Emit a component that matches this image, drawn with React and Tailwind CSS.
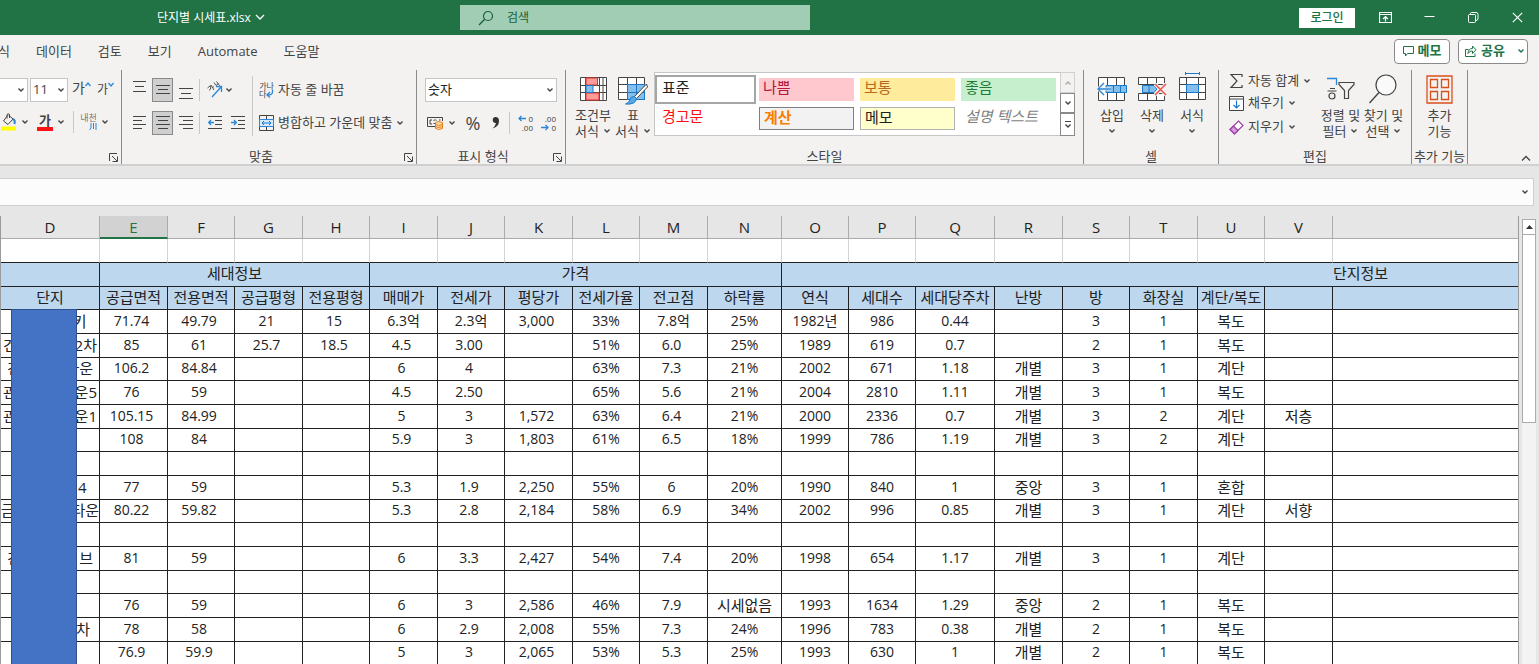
import { useState } from 'react';

// ── Sheet data ────────────────────────────────────────────────────────────
const COLUMNS = [
  { key: 'D', width: 99 },
  { key: 'E', width: 68 },
  { key: 'F', width: 67 },
  { key: 'G', width: 68 },
  { key: 'H', width: 67 },
  { key: 'I', width: 68 },
  { key: 'J', width: 67 },
  { key: 'K', width: 68 },
  { key: 'L', width: 67 },
  { key: 'M', width: 68 },
  { key: 'N', width: 74 },
  { key: 'O', width: 67 },
  { key: 'P', width: 67 },
  { key: 'Q', width: 79 },
  { key: 'R', width: 68 },
  { key: 'S', width: 67 },
  { key: 'T', width: 68 },
  { key: 'U', width: 67 },
  { key: 'V', width: 68 },
  { key: '', width: 607 },
];

const FIELDS = [
  '단지', '공급면적', '전용면적', '공급평형', '전용평형', '매매가', '전세가', '평당가', '전세가율', '전고점',
  '하락률', '연식', '세대수', '세대당주차', '난방', '방', '화장실', '계단/복도', '', '',
];

// name: [start, end, width] — the middle part is covered by the blue shape
const ROWS = [
  { name: ['', '키', 73], cells: ['71.74', '49.79', '21', '15', '6.3억', '2.3억', '3,000', '33%', '7.8억', '25%', '1982년', '986', '0.44', '', '3', '1', '복도', ''] },
  { name: ['건', '2차', 94], cells: ['85', '61', '25.7', '18.5', '4.5', '3.00', '', '51%', '6.0', '25%', '1989', '619', '0.7', '', '2', '1', '복도', ''] },
  { name: ['건', '타운', 86], cells: ['106.2', '84.84', '', '', '6', '4', '', '63%', '7.3', '21%', '2002', '671', '1.18', '개별', '3', '1', '계단', ''] },
  { name: ['관', '운5', 94], cells: ['76', '59', '', '', '4.5', '2.50', '', '65%', '5.6', '21%', '2004', '2810', '1.11', '개별', '3', '1', '복도', ''] },
  { name: ['관', '운1', 94], cells: ['105.15', '84.99', '', '', '5', '3', '1,572', '63%', '6.4', '21%', '2000', '2336', '0.7', '개별', '3', '2', '계단', '저층'] },
  { name: null, cells: ['108', '84', '', '', '5.9', '3', '1,803', '61%', '6.5', '18%', '1999', '786', '1.19', '개별', '3', '2', '계단', ''] },
  { name: null, cells: ['', '', '', '', '', '', '', '', '', '', '', '', '', '', '', '', '', ''] },
  { name: ['', '4', 73], cells: ['77', '59', '', '', '5.3', '1.9', '2,250', '55%', '6', '20%', '1990', '840', '1', '중앙', '3', '1', '혼합', ''] },
  { name: ['금', '타운', 98], cells: ['80.22', '59.82', '', '', '5.3', '2.8', '2,184', '58%', '6.9', '34%', '2002', '996', '0.85', '개별', '3', '1', '계단', '서향'] },
  { name: null, cells: ['', '', '', '', '', '', '', '', '', '', '', '', '', '', '', '', '', ''] },
  { name: ['건', '브', 86], cells: ['81', '59', '', '', '6', '3.3', '2,427', '54%', '7.4', '20%', '1998', '654', '1.17', '개별', '3', '1', '계단', ''] },
  { name: null, cells: ['', '', '', '', '', '', '', '', '', '', '', '', '', '', '', '', '', ''] },
  { name: null, cells: ['76', '59', '', '', '6', '3', '2,586', '46%', '7.9', '시세없음', '1993', '1634', '1.29', '중앙', '2', '1', '복도', ''] },
  { name: ['', '차', 80], cells: ['78', '58', '', '', '6', '2.9', '2,008', '55%', '7.3', '24%', '1996', '783', '0.38', '개별', '2', '1', '복도', ''] },
  { name: null, cells: ['76.9', '59.9', '', '', '5', '3', '2,065', '53%', '5.3', '25%', '1993', '630', '1', '개별', '2', '1', '복도', ''] },
];

// Columns in the number format that reserves room on the right
const PADDED = ['E', 'F', 'G', 'H', 'I', 'J', 'K', 'M'];
const HANGUL = /[가-힣]/;

// ── Small building blocks ─────────────────────────────────────────────────
function Svg({ w, h, children, className = '' }) {
  return (
    <svg
      width={w}
      height={h}
      viewBox={`0 0 ${w} ${h}`}
      fill="none"
      stroke="#444"
      aria-hidden="true"
      className={`shrink-0 ${className}`}
    >
      {children}
    </svg>
  );
}

function Chevron({ className = '', color = '#444' }) {
  return (
    <Svg w={8} h={6} className={className}>
      <path d="M1.5 1.5 4 4 6.5 1.5" stroke={color} strokeWidth="1.4" />
    </Svg>
  );
}

function Lines({ rows, w = 14 }) {
  return (
    <Svg w={w} h={18}>
      {rows.map(([y, x1, x2]) => (
        <path key={y} d={`M${x1} ${y}.5H${x2}`} />
      ))}
    </Svg>
  );
}

function Btn({ label, className = '', children }) {
  return (
    <button type="button" aria-label={label} className={`flex shrink-0 items-center ${className}`}>
      {children}
    </button>
  );
}

function Launcher() {
  return (
    <Btn label="옵션 열기" className="w-4">
      <Svg w={10} h={10} className="mt-1 ml-1">
        <path d="M.5 8V.5H8M3 3l5 5M8.500 3.500V8.500H3.500" />
      </Svg>
    </Btn>
  );
}

function Group({ label, width, launcher, children }) {
  return (
    <section className={`flex shrink-0 flex-col border-r border-[#8a8a8a] ${width}`}>
      <div className="h-[78px]">{children}</div>
      <div className="flex h-4 items-center">
        <span className="flex-1 text-center leading-4 whitespace-nowrap">{label}</span>
        {launcher && <Launcher />}
      </div>
    </section>
  );
}

function BigButton({ lines, width, icon, chevron }) {
  return (
    <button type="button" className={`flex shrink-0 flex-col items-center ${width}`}>
      <span className="flex h-9 items-center">{icon}</span>
      <span className="leading-4 whitespace-nowrap">{lines[0]}</span>
      <span className="flex h-4 items-center gap-1 leading-4 whitespace-nowrap">
        {lines[1]}
        {chevron && <Chevron />}
      </span>
    </button>
  );
}

// ── Title bar and tabs ────────────────────────────────────────────────────
function TitleBar() {
  return (
    <header className="flex h-[35px] shrink-0 items-center bg-[#217346] text-white">
      <div className="flex w-[460px] shrink-0 pl-[157px]">
        <button type="button" className="flex items-center gap-1 text-xs">
          단지별 시세표.xlsx
          <Svg w={10} h={7}>
            <path d="M1 1l4 4 4-4" stroke="#fff" strokeWidth="1.3" />
          </Svg>
        </button>
      </div>
      <label className="flex h-[25px] w-[350px] shrink-0 items-center bg-[#a0cdb4] pl-[18px] text-[#17603a]">
        <Svg w={16} h={16}>
          <circle cx="10" cy="6" r="4.500" stroke="#17603a" strokeWidth="1.2" />
          <path d="M6.700 9.300 1 15" stroke="#17603a" strokeWidth="1.3" />
        </Svg>
        <input
          aria-label="검색"
          placeholder="검색"
          className="ml-[13px] w-full bg-transparent text-xs outline-none placeholder:text-[#17603a]"
        />
      </label>
      <div className="flex-1" />
      <button type="button" className="mr-2 h-5 w-14 bg-white text-xs font-medium text-[#217346]">
        로그인
      </button>
      <Btn label="리본 표시 옵션" className="h-8 w-11 justify-center">
        <Svg w={13} h={11}>
          <path d="M.5.5h12v10H.5zM.5 2.500h12M6.500 9.500V5M4 7l2.500-2.500L9 7" stroke="#fff" strokeWidth="1.200" />
        </Svg>
      </Btn>
      <Btn label="최소화" className="h-8 w-11 justify-center">
        <Svg w={11} h={11}>
          <path d="M.5 4.500h10" stroke="#fff" />
        </Svg>
      </Btn>
      <Btn label="이전 크기로 복원" className="h-8 w-11 justify-center">
        <Svg w={11} h={11}>
          <rect x=".5" y="2.500" width="7" height="8" rx="1" stroke="#fff" />
          <path d="M2.500 2.500V1.500q0-1 1-1h4.500q2 0 2 2v4q0 2-2 2h-.5" stroke="#fff" />
        </Svg>
      </Btn>
      <Btn label="닫기" className="h-8 w-11 justify-center">
        <Svg w={11} h={11}>
          <path d="M.8.8l9.400 9.400M10.200.8.8 10.200" stroke="#fff" strokeWidth="1.2" />
        </Svg>
      </Btn>
    </header>
  );
}

function TabBar() {
  return (
    <nav className="flex h-8 shrink-0 items-center overflow-hidden pr-[11px]">
      <div className="-ml-0.5 flex gap-[26px]">
        {['식', '데이터', '검토', '보기', 'Automate', '도움말'].map((tab) => (
          <button key={tab} type="button" className="leading-5 whitespace-nowrap">
            {tab}
          </button>
        ))}
      </div>
      <div className="flex-1" />
      <button
        type="button"
        className="mr-2 flex h-[25px] w-14 items-center justify-center gap-1 rounded border border-[#8a8a8a] bg-white font-bold text-[#217346]"
      >
        <Svg w={11} h={11}>
          <path d="M.5.5h10v7h-6l-2 2.500V7.500h-2z" stroke="#217346" />
        </Svg>
        메모
      </button>
      <button
        type="button"
        className="flex h-[25px] w-[70px] items-center gap-1 rounded border border-[#8a8a8a] bg-white pl-1.5 font-bold text-[#217346]"
      >
        <Svg w={12} h={12}>
          <path d="M3.500 4.500h-3v7h9.500V8.500M3 8.500C3 5 5 3.500 7.500 3.500V1l3.500 3.800L7.500 8.500V6C5.500 6 4 6.800 3 8.500z" stroke="#217346" />
        </Svg>
        공유
        <Chevron className="ml-2" color="#217346" />
      </button>
    </nav>
  );
}

// ── Ribbon groups ─────────────────────────────────────────────────────────
function FontGroup() {
  return (
    <Group label="" width="w-[122px]" launcher>
      <div className="mt-2 flex h-6 items-center">
        <Btn label="글꼴" className="h-6 w-7 justify-end border border-l-0 border-[#c6c6c6] bg-white pr-0.5">
          <Chevron />
        </Btn>
        <Btn label="글꼴 크기" className="ml-0.5 h-6 w-[38px] justify-between border border-[#c6c6c6] bg-white pr-0.5 pl-0.5">
          11
          <Chevron />
        </Btn>
        <Btn label="글꼴 크기 크게" className="ml-1 h-6 items-start text-sm leading-5">
          가
          <Svg w={6} h={5} className="mt-1">
            <path d="M.5 4 3 1l2.500 3" stroke="#2b88d8" strokeWidth="1.300" />
          </Svg>
        </Btn>
        <Btn label="글꼴 크기 작게" className="ml-1.5 h-6 items-start text-xs leading-6">
          가
          <Svg w={6} h={5} className="mt-1">
            <path d="M.5 1 3 4l2.500-3" stroke="#2b88d8" strokeWidth="1.300" />
          </Svg>
        </Btn>
      </div>
      <div className="mt-2 flex h-6 items-center pl-px">
        <Btn label="채우기 색" className="gap-1">
          <Svg w={16} h={18}>
            <path d="M6.500 2.500 2.500 8l4.500 3.500 5-5.500-4.500-4M6 5.500V1.500q1.500-1.500 2.500 0V5" />
            <path d="M12 6q2.500 1 1.500 5" stroke="#2b88d8" strokeWidth="2" />
            <path d="M0 15.500h15" stroke="#ff0" strokeWidth="4" />
          </Svg>
          <Chevron />
        </Btn>
        <Btn label="글꼴 색" className="ml-2 gap-1">
          <span className="flex w-4 flex-col items-center border-b-4 border-[#f11] leading-[14px] font-bold">가</span>
          <Chevron />
        </Btn>
        <span className="ml-2 h-[22px] w-px bg-[#c8c8c8]" />
        <Btn label="윗주 필드 표시" className="ml-1.5 gap-1">
          <span className="flex flex-col text-[9px] leading-[9px] text-[#777]">
            내천
            <Svg w={17} h={9}>
              <path d="M11 1v5l-1.500 2M13.500 1v6M16 1v7" stroke="#2b88d8" />
            </Svg>
          </span>
          <Chevron />
        </Btn>
      </div>
    </Group>
  );
}

function AlignGroup() {
  return (
    <Group label="맞춤" width="w-[295px]" launcher>
      <div className="flex pl-2.5">
        <div className="mt-2 flex flex-col gap-[9px]">
          <div className="flex h-6 items-center">
            <Btn label="위쪽 맞춤" className="w-5">
              <Lines rows={[[0, 1, 14], [5, 3, 12], [10, 1, 14]]} />
            </Btn>
            <Btn label="가운데 맞춤" className="h-6 w-[21px] justify-center border border-[#8a8a8a] bg-[#cfcfcf]">
              <Lines rows={[[4, 0, 14], [8, 2, 12], [12, 0, 14]]} />
            </Btn>
            <Btn label="아래쪽 맞춤" className="ml-1.5 w-5">
              <Lines rows={[[7, 0, 14], [12, 2, 12], [17, 0, 14]]} />
            </Btn>
            <span className="h-[22px] w-px bg-[#c8c8c8]" />
            <Btn label="방향" className="ml-[7px] gap-0.5">
              <Svg w={16} h={18}>
                <path d="M5 16 14.500 5.500M9 5.500h5.500V11" stroke="#2b88d8" strokeWidth="1.300" />
                <path d="M.5 7l3-2.500q1 2.500-1 5M4 4l3 5M5.500 6.500l1.500-1M7 1.500l2 3 2.500-2M9.500.5l3 4" stroke="#555" />
              </Svg>
              <Chevron />
            </Btn>
          </div>
          <div className="flex h-6 items-center">
            <Btn label="왼쪽 맞춤" className="w-5">
              <Lines rows={[[2, 1, 14], [6, 1, 10], [10, 1, 14], [14, 1, 10]]} />
            </Btn>
            <Btn label="가로 가운데 맞춤" className="h-6 w-[21px] justify-center border border-[#8a8a8a] bg-[#cfcfcf]">
              <Lines rows={[[2, 0, 14], [6, 2, 12], [10, 0, 14], [14, 2, 12]]} />
            </Btn>
            <Btn label="오른쪽 맞춤" className="ml-1.5 w-5">
              <Lines rows={[[2, 0, 14], [6, 4, 14], [10, 0, 14], [14, 4, 14]]} />
            </Btn>
            <span className="h-[22px] w-px bg-[#c8c8c8]" />
            <Btn label="내어쓰기" className="ml-2 w-[23px]">
              <Svg w={14} h={18}>
                <path d="M0 2.500h14M7 6.500h7M7 10.500h7M0 14.500h14" />
                <path d="M6 8.500H1M3 6 .7 8.500 3 11" stroke="#2b88d8" strokeWidth="1.400" />
              </Svg>
            </Btn>
            <Btn label="들여쓰기">
              <Svg w={14} h={18}>
                <path d="M0 2.500h14M7 6.500h7M7 10.500h7M0 14.500h14" />
                <path d="M0 8.500h5M3 6l2.300 2.500L3 11" stroke="#2b88d8" strokeWidth="1.400" />
              </Svg>
            </Btn>
          </div>
        </div>
        <span className="mt-1.5 ml-[7px] h-[60px] w-px bg-[#c8c8c8]" />
        <div className="mt-2 ml-1.5 flex flex-col gap-[9px]">
          <Btn label="자동 줄 바꿈" className="h-6 gap-1 whitespace-nowrap">
            <span className="flex w-[15px] flex-col text-[8px] leading-2">
              가나
              <span className="flex">
                다
                <Svg w={8} h={8}>
                  <path d="M6.500 0v2q0 3-5 3M4 2 1 5l3 2.500" stroke="#2b88d8" strokeWidth="1.300" />
                </Svg>
              </span>
            </span>
            자동 줄 바꿈
          </Btn>
          <Btn label="병합하고 가운데 맞춤" className="h-6 gap-1 whitespace-nowrap">
            <Svg w={15} h={16}>
              <path d="M.5.5h14v15H.5zM7.500.5V4M7.500 12v3.500" />
              <rect x=".5" y="4.500" width="14" height="7" fill="#d4e9f9" stroke="#2b88d8" />
              <path d="M3 8h9M5 6 3 8l2 2M10 6l2 2-2 2" stroke="#1a78c8" />
            </Svg>
            병합하고 가운데 맞춤
            <Chevron />
          </Btn>
        </div>
      </div>
    </Group>
  );
}

function NumberGroup() {
  return (
    <Group label="표시 형식" width="w-[149px]" launcher>
      <div className="px-2 pt-2">
        <div className="flex h-6 w-[132px] items-center border border-[#c6c6c6] bg-white pr-0.5 pl-0.5">
          <select aria-label="표시 형식" className="h-5 min-w-0 flex-1 appearance-none bg-transparent text-[#222] outline-none">
            <option>숫자</option>
          </select>
          <Chevron />
        </div>
        <div className="mt-[9px] flex h-6 items-center pl-0.5">
          <Btn label="회계 표시 형식" className="gap-1">
            <Svg w={17} h={16}>
              <path d="M8 11.500H.5v-9h15V6M3 5v4M3 5h2M3 9h2M6.500 5.500q2-1.500 3 0M6.500 8.500h1.500M12 5h1.500" />
              <path d="M8.500 7.500v6q3 2 7 0v-6q-4-2-7 0zM8.500 9.500q3 2 7 0M8.500 11.500q3 2 7 0" fill="#fbd9b0" stroke="#e8821a" />
            </Svg>
            <Chevron />
          </Btn>
          <Btn label="백분율" className="ml-2 w-[18px] justify-center text-lg leading-6">%</Btn>
          <Btn label="쉼표" className="ml-[7px] w-3 justify-center">
            <Svg w={9} h={14}>
              <path d="M4.500 1a3 3 0 1 0 .5 6Q4.500 10 1.500 12.500 8 10.500 8 5 8 1 4.500 1z" fill="#333" stroke="none" />
            </Svg>
          </Btn>
          <span className="ml-2 h-[22px] w-px bg-[#c8c8c8]" />
          <Btn label="자릿수 늘림" className="ml-[7px]">
            <span className="flex w-4 flex-col items-end text-[8px] leading-[9px]">
              <span className="flex items-center gap-0.5">
                <Svg w={8} h={7}>
                  <path d="M8 3.500H1M3.500 1 1 3.500 3.500 6" stroke="#2b88d8" strokeWidth="1.300" />
                </Svg>
                0
              </span>
              .00
            </span>
          </Btn>
          <Btn label="자릿수 줄임" className="ml-[7px]">
            <span className="flex w-4 flex-col items-end text-[8px] leading-[9px]">
              .00
              <span className="flex items-center gap-0.5">
                <Svg w={8} h={7}>
                  <path d="M0 3.500h7M4.500 1 7 3.500 4.500 6" stroke="#2b88d8" strokeWidth="1.300" />
                </Svg>
                0
              </span>
            </span>
          </Btn>
        </div>
      </div>
    </Group>
  );
}

const STYLES = [
  { name: '표준', cls: 'h-[23px] bg-white text-[#222] outline-2 outline-offset-1 outline-[#a6a6a6]' },
  { name: '나쁨', cls: 'h-[23px] bg-[#ffc7ce] text-[#b0183c]' },
  { name: '보통', cls: 'h-[23px] bg-[#ffeb9c] text-[#b8691d]' },
  { name: '좋음', cls: 'h-[23px] bg-[#c6efce] text-[#1e7a35]' },
  { name: '경고문', cls: 'h-[23px] text-[#f11]' },
  { name: '계산', cls: 'h-[23px] border border-[#7f7f7f] bg-[#f2f2f2] font-bold text-[#fa7d00]' },
  { name: '메모', cls: 'h-[23px] border border-[#b2b2b2] bg-[#ffffcc] text-[#222]' },
  { name: '설명 텍스트', cls: 'h-[23px] text-[#7f7f7f] italic' },
];

function StyleGroup() {
  return (
    <Group label="스타일" width="w-[518px]">
      <div className="flex">
        <div className="flex pt-px pl-[7px]">
          <BigButton
            lines={['조건부', '서식']}
            width="w-10"
            chevron
            icon={
              <Svg w={27} h={24}>
                <path d="M.5.5h26v23H.5zM.5 8.500h26M.5 15.500h26M5.500.5v23M19.500.5v23M23 .5v23" fill="#fff" />
                <path d="M6 1h11.500v7H6zM6 16h13v7H6z" fill="#ff9a9a" stroke="#e0362c" />
                <path d="M6 8.500h7v7H6z" fill="#83beec" stroke="#1a78c8" />
              </Svg>
            }
          />
          <BigButton
            lines={['표', '서식']}
            width="w-10"
            chevron
            icon={
              <Svg w={30} h={32}>
                <path d="M.5 4.500h26v22H.5zM.5 11.500h26M.5 19.500h26M9.500 4.500v22M18.500 4.500v22" fill="#fff" />
                <path d="M9.500 11.500h17v15h-17z" fill="#83beec" stroke="#1a78c8" />
                <path d="M18.500 11.500v15M9.500 19.500h17" stroke="#1a78c8" />
                <path d="M28.500 11 16.500 23.500l2 2L29.500 14z" fill="#fff" />
                <path d="M16.500 23.500q-4 0-4.500 3T7.500 31q10 1 11-5.500z" fill="#5aa9e6" stroke="#1a78c8" />
              </Svg>
            }
          />
        </div>
        <div className="mt-0.5 ml-px flex h-16 border border-[#c6c6c6] bg-white">
          <div className="grid grid-cols-[repeat(4,95px)] content-start gap-x-1.5 gap-y-1.5 pt-[5px] pr-1 pl-[3px]">
            {STYLES.map((s) => (
              <button
                key={s.name}
                type="button"
                className={`flex items-start pl-1 text-[15px] leading-[18px] whitespace-nowrap ${s.cls}`}
              >
                {s.name}
              </button>
            ))}
          </div>
          <div className="-my-px -mr-px flex w-[15px] flex-col">
            <Btn label="위로" className="h-[21px] justify-center border border-[#d0d0d0] bg-[#f3f2f1]">
              <Chevron className="rotate-180" color="#aaa" />
            </Btn>
            <Btn label="아래로" className="h-5 justify-center border border-[#8a8a8a]">
              <Chevron />
            </Btn>
            <Btn label="자세히" className="h-[23px] flex-col justify-center border border-[#8a8a8a]">
              <Svg w={8} h={2}>
                <path d="M1 .5h6" />
              </Svg>
              <Chevron />
            </Btn>
          </div>
        </div>
      </div>
    </Group>
  );
}

function CellGroup() {
  return (
    <Group label="셀" width="w-[135px]">
      <div className="flex pt-px pl-2">
        <BigButton
          lines={['삽입', '']}
          width="w-10"
          chevron
          icon={
            <Svg w={30} h={24}>
              <path d="M1.500.5h26v23h-26zM10.500.5v23M19.500.5v23" fill="#fff" />
              <path d="M9 8.500h20.500v7H9zM16.500 8.500v7M23.500 8.500v7" fill="#83beec" stroke="#1a78c8" />
              <path d="M14 12H1M7 6l-6 6 6 6" stroke="#f3f2f1" strokeWidth="3" />
              <path d="M14 12H1M7 6l-6 6 6 6" stroke="#2b88d8" strokeWidth="1.300" />
            </Svg>
          }
        />
        <BigButton
          lines={['삭제', '']}
          width="w-10"
          chevron
          icon={
            <Svg w={29} h={24}>
              <path d="M.5.5h26v7H.5zM.5 16.500h26v7H.5zM9.500.5v7M18.500.5v7M9.500 16.500v7M18.500 16.500v7" fill="#fff" />
              <path d="M4.500 8.500H16l3 3.500-3 3.500H4.500zM11 8.500v7" fill="#83beec" stroke="#1a78c8" />
              <path d="M17 7l11 11M28 7 17 18" stroke="#f3f2f1" strokeWidth="3.500" />
              <path d="M17 7l11 11M28 7 17 18" stroke="#f0524a" strokeWidth="1.500" />
            </Svg>
          }
        />
        <BigButton
          lines={['서식', '']}
          width="w-10"
          chevron
          icon={
            <Svg w={27} h={34}>
              <path d="M.5 5.500h26v22H.5zM.5 12.500h26M.5 20.500h26M7.500 5.500v22M19.500 5.500v22" fill="#fff" />
              <path d="M7.500 12.500h12v8h-12z" fill="#83beec" stroke="#1a78c8" />
              <path d="M6.500 1.500h14M6.500 0v3M20.500 0v3" stroke="#1a78c8" />
            </Svg>
          }
        />
      </div>
    </Group>
  );
}

function EditGroup() {
  return (
    <Group label="편집" width="w-[193px]">
      <div className="flex pt-px pl-2.5">
        <div className="flex w-[90px] flex-col">
          <Btn label="자동 합계" className="h-5 gap-1 whitespace-nowrap">
            <Svg w={15} h={16}>
              <path d="M13 4V1.500H2L8 8l-6 6.500h11V12" strokeWidth="1.200" />
            </Svg>
            자동 합계
            <Chevron />
          </Btn>
          <Btn label="채우기" className="h-6 gap-1 whitespace-nowrap">
            <Svg w={15} h={15}>
              <path d="M.5.5h14v14H.5zM.5 3h14" fill="#fff" />
              <path d="M7.500 4.500V12M4.500 9l3 3 3-3" stroke="#1a78c8" strokeWidth="1.200" />
            </Svg>
            채우기
            <Chevron />
          </Btn>
          <Btn label="지우기" className="h-6 gap-1 whitespace-nowrap">
            <Svg w={15} h={15}>
              <path d="M1 9.500 9.500 1 14 5.500 5.500 14z" fill="#fff" stroke="#9b3fa5" strokeWidth="1.200" />
              <path d="M1 9.500 4.500 6 9 10.500 5.500 14z" fill="#d59bdb" stroke="#9b3fa5" strokeWidth="1.200" />
            </Svg>
            지우기
            <Chevron />
          </Btn>
        </div>
        <BigButton
          lines={['정렬 및', '필터']}
          width="w-[43px]"
          chevron
          icon={
            <Svg w={29} h={24}>
              <path d="M1 1.500h9.500V8" stroke="#2b88d8" strokeWidth="1.300" />
              <path d="M4 11.500h5M1.500 14h9" strokeWidth="1.200" />
              <circle cx="6" cy="19" r="3" strokeWidth="1.200" />
              <path d="M13 5.500h15v2l-5.500 6v8h-4v-8L13 7.500z" strokeWidth="1.200" />
            </Svg>
          }
        />
        <BigButton
          lines={['찾기 및', '선택']}
          width="w-[43px]"
          chevron
          icon={
            <Svg w={29} h={32}>
              <circle cx="17" cy="12" r="10" strokeWidth="1.200" fill="#fafafa" />
              <path d="M10 19.500.5 30" strokeWidth="1.400" />
            </Svg>
          }
        />
      </div>
    </Group>
  );
}

function AddInGroup() {
  return (
    <Group label="추가 기능" width="w-14">
      <div className="flex justify-center pt-px">
        <BigButton
          lines={['추가', '기능']}
          width="w-10"
          icon={
            <Svg w={27} h={29}>
              <path d="M1 1h25v27H1zM4.500 4.500h7v8h-7zM15.500 4.500h7v8h-7zM4.500 16.500h7v8h-7zM15.500 16.500h7v8h-7z" stroke="#d9501e" strokeWidth="1.300" />
            </Svg>
          }
        />
      </div>
    </Group>
  );
}

function Ribbon() {
  return (
    <div className="flex h-[99px] shrink-0 border-b-2 border-[#d0d0d0] pt-[3px]">
      <FontGroup />
      <AlignGroup />
      <NumberGroup />
      <StyleGroup />
      <CellGroup />
      <EditGroup />
      <AddInGroup />
      <div className="flex flex-1 items-end justify-end pr-2">
        <Btn label="리본 축소" className="h-3">
          <Svg w={10} h={7}>
            <path d="M1 5.500 5 1.500l4 4" strokeWidth="1.300" />
          </Svg>
        </Btn>
      </div>
    </div>
  );
}

// ── Worksheet ─────────────────────────────────────────────────────────────
function Sheet({ selected, onSelect }) {
  return (
    <div className="relative min-w-0 flex-1 overflow-hidden border-r border-l border-[#9b9b9b]">
      <table className="w-[1939px] table-fixed border-separate border-spacing-0 text-center text-[15px] leading-5 text-[#222]">
        <colgroup>
          {COLUMNS.map((c) => (
            <col key={c.key} style={{ width: c.width }} />
          ))}
        </colgroup>
        <thead>
          <tr className="h-[23px]">
            {COLUMNS.map((c) => (
              <th
                key={c.key}
                scope="col"
                onClick={() => onSelect(c.key)}
                className={`p-0 font-normal ${
                  c.key === selected
                    ? 'border-r border-b-2 border-r-[#ababab] border-b-[#217346] bg-[#d2d2d2] text-[#217346]'
                    : 'border-r border-b border-[#ababab] bg-[#e6e6e6]'
                }`}
              >
                {c.key}
              </th>
            ))}
          </tr>
        </thead>
        <tbody>
          <tr className="h-6">
            {COLUMNS.map((c) => (
              <td key={c.key} className="border-r border-b border-r-[#d4d4d4] border-b-[#222] bg-white p-0" />
            ))}
          </tr>
          <tr className="h-6 bg-[#bdd7ee]">
            <td className="border-r border-b border-[#222] p-0" />
            <td colSpan={4} className="border-r border-b border-[#222] p-0 pb-[3px]">세대정보</td>
            <td colSpan={6} className="border-r border-b border-[#222] p-0 pb-[3px]">가격</td>
            <td colSpan={9} className="border-r border-b border-[#222] p-0 pb-[3px]">단지정보</td>
          </tr>
          <tr className="h-[23px] bg-[#bdd7ee]">
            {FIELDS.map((f, i) => (
              <td key={COLUMNS[i].key} className="border-r border-b border-[#222] p-0 pb-0.5 whitespace-nowrap">
                {f}
              </td>
            ))}
          </tr>
          {ROWS.map((row, r) => (
            <tr key={r} className={`bg-white ${r % 3 === 2 ? 'h-[23px]' : 'h-6'}`}>
              <td className="border-r border-b border-[#222] p-0 pb-0.5">
                {row.name && (
                  <div className="mx-auto flex justify-between whitespace-nowrap" style={{ width: row.name[2] }}>
                    <span>{row.name[0]}</span>
                    <span>{row.name[1]}</span>
                  </div>
                )}
              </td>
              {row.cells.map((v, i) => {
                const key = COLUMNS[i + 1].key;
                return (
                  <td
                    key={key}
                    className={`border-r border-b border-[#222] pt-0 pb-0.5 pl-0 whitespace-nowrap ${
                      PADDED.includes(key) && !HANGUL.test(v) ? 'pr-1' : 'pr-0'
                    } ${/\d/.test(v) ? 'text-sm leading-5' : ''}`}
                  >
                    {v}
                  </td>
                );
              })}
              <td className="border-r border-b border-[#222] p-0" />
            </tr>
          ))}
        </tbody>
      </table>
      {/* Shape drawn over the name column */}
      <div className="absolute top-[93px] bottom-0 left-[10px] w-[66px] border border-b-0 border-[#2f528f] bg-[#4472c4]" />
    </div>
  );
}

function ScrollBar() {
  return (
    <div className="flex w-5 shrink-0 flex-col px-[3px] pt-[3px]">
      <Btn label="위로 스크롤" className="h-4 justify-center border border-[#ababab] bg-white">
        <Svg w={7} h={4}>
          <path d="M0 4 3.500 0 7 4z" fill="#333" stroke="none" />
        </Svg>
      </Btn>
      <div className="flex-1 bg-[#f3f3f3]">
        <div className="h-[188px] border border-t-0 border-[#ababab] bg-white" />
      </div>
    </div>
  );
}

export default function App() {
  const [selected, setSelected] = useState('E');

  return (
    <div className="flex h-screen flex-col overflow-hidden bg-[#e6e6e6] font-['Open_Sans','Noto_Sans_CJK_KR',sans-serif] text-[13px] text-[#444]">
      <TitleBar />
      <div className="shrink-0 bg-[#f3f2f1]">
        <TabBar />
        <Ribbon />
      </div>
      <div className="mt-3 mr-[5px] flex h-7 shrink-0 items-center border border-l-0 border-[#cfcfcf] bg-[#fcfcfc] pr-1">
        <input aria-label="수식 입력줄" className="h-6 min-w-0 flex-1 bg-transparent px-2 outline-none" />
        <Chevron />
      </div>
      <div className="mt-[10px] flex min-h-0 flex-1">
        <Sheet selected={selected} onSelect={setSelected} />
        <ScrollBar />
      </div>
    </div>
  );
}
